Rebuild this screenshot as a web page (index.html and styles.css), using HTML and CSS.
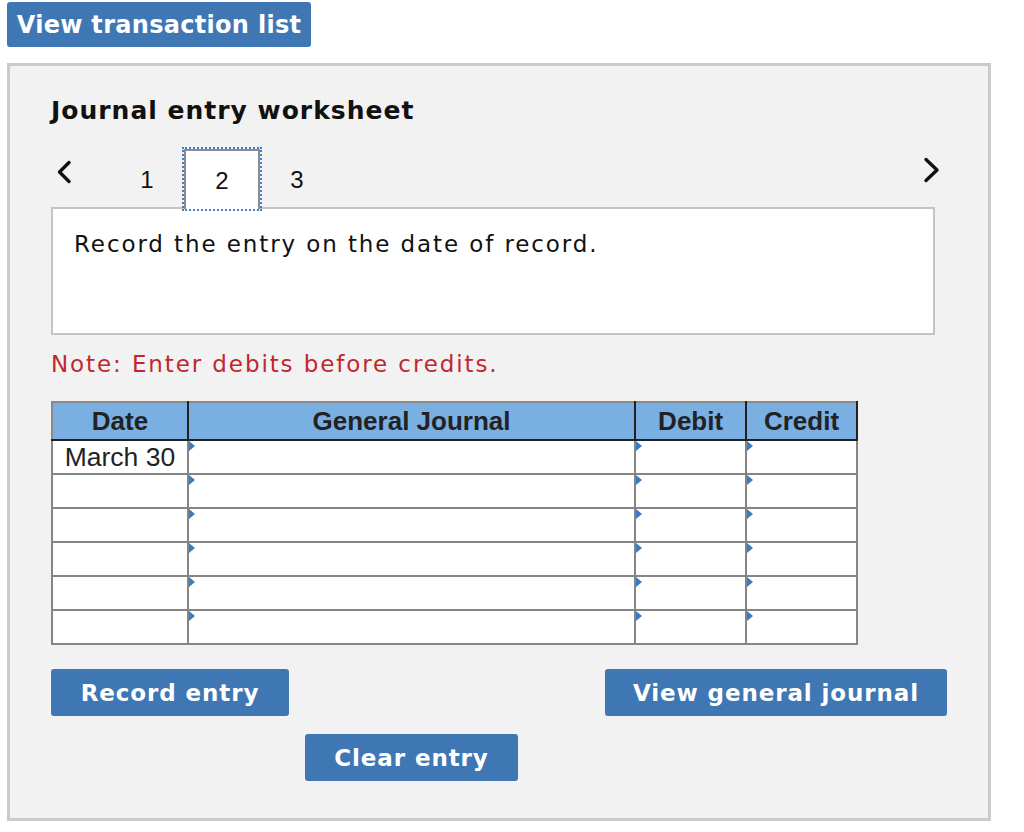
FILE: index.html
```html
<!DOCTYPE html>
<html lang="en">
<head>
    <meta charset="UTF-8">
    <title>Journal entry worksheet</title>
    <link rel="stylesheet" href="styles.css">
</head>
<body>
    <button class="btn btn-top" type="button">View transaction list</button>

    <!-- Worksheet panel -->
    <section class="panel">
        <h2 class="panel-title">Journal entry worksheet</h2>

        <div class="steps">
            <button class="step-arrow" type="button" aria-label="Previous">
                <svg width="16" height="24" viewBox="0 0 16 24"><polyline points="13,2.5 3.5,12 13,21.5" fill="none" stroke="#111" stroke-width="3.4" stroke-linecap="round" stroke-linejoin="round"/></svg>
            </button>
            <span class="step">1</span>
            <span class="step active">2</span>
            <span class="step">3</span>
            <button class="step-arrow next" type="button" aria-label="Next">
                <svg width="18" height="26" viewBox="0 0 18 26"><polyline points="3,2.5 14,13 3,23.5" fill="none" stroke="#111" stroke-width="3.4" stroke-linecap="round" stroke-linejoin="round"/></svg>
            </button>
        </div>

        <div class="task">Record the entry on the date of record.</div>

        <p class="note">Note: Enter debits before credits.</p>

        <table class="journal">
            <colgroup>
                <col class="col-date">
                <col class="col-account">
                <col class="col-amount">
                <col class="col-amount">
            </colgroup>
            <thead>
                <tr>
                    <th>Date</th>
                    <th>General Journal</th>
                    <th>Debit</th>
                    <th>Credit</th>
                </tr>
            </thead>
            <tbody>
                <tr>
                    <td class="date">March 30</td>
                    <td class="entry"></td>
                    <td class="entry"></td>
                    <td class="entry"></td>
                </tr>
                <tr>
                    <td class="date"></td>
                    <td class="entry"></td>
                    <td class="entry"></td>
                    <td class="entry"></td>
                </tr>
                <tr>
                    <td class="date"></td>
                    <td class="entry"></td>
                    <td class="entry"></td>
                    <td class="entry"></td>
                </tr>
                <tr>
                    <td class="date"></td>
                    <td class="entry"></td>
                    <td class="entry"></td>
                    <td class="entry"></td>
                </tr>
                <tr>
                    <td class="date"></td>
                    <td class="entry"></td>
                    <td class="entry"></td>
                    <td class="entry"></td>
                </tr>
                <tr>
                    <td class="date"></td>
                    <td class="entry"></td>
                    <td class="entry"></td>
                    <td class="entry"></td>
                </tr>
            </tbody>
        </table>

        <div class="actions">
            <button class="btn btn-record" type="button">Record entry</button>
            <button class="btn btn-view" type="button">View general journal</button>
        </div>
        <button class="btn btn-clear" type="button">Clear entry</button>
    </section>
</body>
</html>
```

FILE: styles.css
```css
/* Worksheet page */
body {
    font-family: "DejaVu Sans", Verdana, sans-serif;
    background-color: #fff;
    color: #111;
    margin: 0;
    padding: 2px 0 0 7px;
}

.btn {
    display: block;
    height: 47px;
    padding: 0;
    background: #3f77b5;
    color: #fff;
    border: none;
    border-radius: 3px;
    font-family: "DejaVu Sans", Verdana, sans-serif;
    font-weight: bold;
    font-size: 23px;
    letter-spacing: 0.9px;
    cursor: pointer;
}
.btn-top {
    width: 304px;
    height: 45px;
    font-size: 24px;
    letter-spacing: 0.3px;
}

.panel {
    width: 984px;
    box-sizing: border-box;
    margin-top: 16px;
    padding: 30px 41px 37px;
    background: #f2f2f2;
    border: 3px solid #cbcbcb;
}
.panel-title {
    margin: 0;
    font-size: 25px;
    line-height: 30px;
    letter-spacing: 1px;
}

/* Step navigation */
.steps {
    display: flex;
    align-items: center;
    height: 60px;
    margin-top: 23px;
    margin-bottom: -2px;
}
.step-arrow {
    display: flex;
    align-self: flex-start;
    width: 59px;
    margin-top: 11px;
    padding: 0 0 0 5px;
    background: none;
    border: none;
}
.step-arrow.next {
    width: auto;
    margin: 8px 6px 0 auto;
    padding: 0;
}
.step {
    display: flex;
    align-items: center;
    justify-content: center;
    box-sizing: border-box;
    width: 74px;
    height: 60px;
    padding-top: 2px;
    font-family: "Liberation Sans", Arial, sans-serif;
    font-size: 24px;
}
.step.active {
    width: 76px;
    background: #fff;
    border: 2px solid #8c8c8c;
    border-bottom: none;
    outline: 2px dotted #3f7fcd;
}

.task {
    width: 884px;
    height: 128px;
    box-sizing: border-box;
    padding: 20px 21px;
    background: #fff;
    border: 2px solid #c4c4c4;
    font-size: 23px;
    line-height: 30px;
    letter-spacing: 1.9px;
}

.note {
    margin: 12px 0 0;
    color: #c1272d;
    font-size: 23px;
    line-height: 34px;
    letter-spacing: 1.9px;
}

/* Journal table */
.journal {
    width: 807px;
    margin-top: 20px;
    border-collapse: collapse;
    font-family: "Liberation Sans", Arial, sans-serif;
    background: #fff;
}
.col-date { width: 136px; }
.col-account { width: 448px; }
.col-amount { width: 111px; }
.journal th {
    height: 36px;
    padding: 0;
    background: #7aafe2;
    border: 2px solid #222;
    border-top-color: #8a8a8a;
    font-size: 26px;
    color: #222;
}
.journal th:first-child {
    border-left-color: #8a8a8a;
}
.journal td {
    height: 32px;
    padding: 0;
    border: 2px solid #858585;
    vertical-align: top;
    font-size: 26.5px;
}
.journal td.date {
    text-align: center;
    vertical-align: middle;
    color: #222;
}
.journal td.entry::before {
    content: "";
    display: block;
    width: 0;
    height: 0;
    border-left: 6px solid #3a7cc4;
    border-top: 5px solid transparent;
    border-bottom: 5px solid transparent;
}

/* Buttons under the table */
.actions {
    display: flex;
    justify-content: space-between;
    margin-top: 24px;
}
.btn-record { width: 238px; }
.btn-view { width: 342px; }
.btn-clear {
    width: 213px;
    margin: 18px 0 0 254px;
}
```
